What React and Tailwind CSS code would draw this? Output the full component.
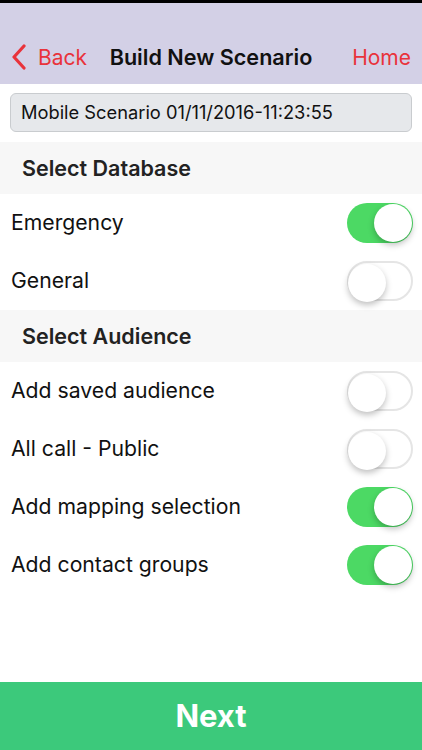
import { useState } from 'react'

function Toggle({ on, onClick }) {
  return (
    <button
      onClick={onClick}
      className={`relative w-[66px] h-[40px] rounded-full shrink-0 transition-colors ${
        on ? 'bg-[#4cd964]' : 'bg-white border-2 border-[#e5e5e5]'
      }`}
    >
      <span
        className={`absolute top-[1px] w-[38px] h-[38px] rounded-full bg-white shadow-[0_3px_6px_rgba(0,0,0,0.25)] ${
          on ? 'right-[1px]' : 'left-[-1px] top-[-1px]'
        }`}
      />
    </button>
  )
}

function SectionHeader({ title }) {
  return (
    <div className="h-[52px] bg-[#f7f7f7] flex items-center px-[22px]">
      <span className="text-[21.5px] font-semibold text-[#222]">{title}</span>
    </div>
  )
}

function Row({ label, on, onToggle }) {
  return (
    <div className="h-[58px] flex items-center justify-between pl-[11px] pr-[9px]">
      <span className="text-[21.2px] text-[#111]">{label}</span>
      <Toggle on={on} onClick={onToggle} />
    </div>
  )
}

export default function App() {
  const [db, setDb] = useState({ emergency: true, general: false })
  const [aud, setAud] = useState({ saved: false, allcall: false, mapping: true, groups: true })

  return (
    <div
      className="w-[422px] h-[750px] bg-white flex flex-col overflow-hidden"
      style={{ fontFamily: 'Inter, "Liberation Sans", Arial, sans-serif' }}
    >
      {/* status bar strip */}
      <div className="h-[3px] bg-black" />

      {/* nav */}
      <div className="h-[81px] bg-[#d3d0e6] flex items-end pb-[11px] px-[11px]">
        <div className="flex items-center text-[#e9333b] text-[21px] w-[90px]">
          <svg width="16" height="26" viewBox="0 0 16 26" className="mr-[11px]">
            <path d="M13 2 L3 13 L13 24" fill="none" stroke="#e9333b" strokeWidth="3.2" strokeLinecap="round" strokeLinejoin="round" />
          </svg>
          Back
        </div>
        <div className="flex-1 text-center font-semibold text-[21.6px] text-[#111]">Build New Scenario</div>
        <div className="text-[#e9333b] text-[21px] w-[90px] text-right">Home</div>
      </div>

      {/* scenario name */}
      <div className="px-[10px] pt-[9px] pb-[10px]">
        <div className="h-[39px] rounded-[6px] bg-[#e6e8eb] border border-[#c9cccf] flex items-center px-[10px] text-[18.3px] text-[#111]">
          Mobile Scenario 01/11/2016-11:23:55
        </div>
      </div>

      <SectionHeader title="Select Database" />
      <Row label="Emergency" on={db.emergency} onToggle={() => setDb({ ...db, emergency: !db.emergency })} />
      <Row label="General" on={db.general} onToggle={() => setDb({ ...db, general: !db.general })} />

      <SectionHeader title="Select Audience" />
      <Row label="Add saved audience" on={aud.saved} onToggle={() => setAud({ ...aud, saved: !aud.saved })} />
      <Row label="All call - Public" on={aud.allcall} onToggle={() => setAud({ ...aud, allcall: !aud.allcall })} />
      <Row label="Add mapping selection" on={aud.mapping} onToggle={() => setAud({ ...aud, mapping: !aud.mapping })} />
      <Row label="Add contact groups" on={aud.groups} onToggle={() => setAud({ ...aud, groups: !aud.groups })} />

      <div className="flex-1" />

      <button className="h-[68px] bg-[#3cc97b] text-white text-[31px] font-bold flex items-center justify-center">
        Next
      </button>
    </div>
  )
}
